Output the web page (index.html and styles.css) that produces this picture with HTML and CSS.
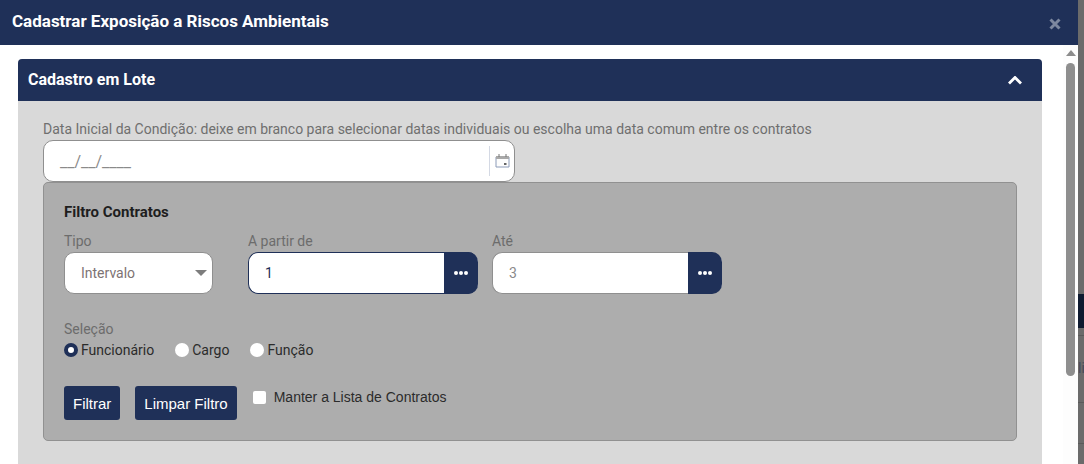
FILE: index.html
```html
<!DOCTYPE html>
<html lang="pt-BR">

<head>
    <meta charset="UTF-8">
    <title>Cadastrar Exposição a Riscos Ambientais</title>
    <link rel="stylesheet" href="styles.css">
</head>

<body>
    <div class="modal">
        <div class="modal-topo">
            <h1>Cadastrar Exposição a Riscos Ambientais</h1>
            <svg class="fechar" width="12" height="12" viewBox="0 0 12 12"><path d="M1.500 1.500l9 9M10.500 1.500l-9 9" stroke="#7d889f" stroke-width="3" fill="none"/></svg>
        </div>
        <div class="modal-corpo">
            <div class="conteudo">
                <div class="painel">
                    <div class="painel-topo">
                        <h2>Cadastro em Lote</h2>
                        <svg width="14" height="9" viewBox="0 0 14 9"><path d="M1 7.500l6-6 6 6" stroke="#fff" stroke-width="2.800" fill="none"/></svg>
                    </div>
                    <div class="painel-corpo">
                        <label class="rotulo">Data Inicial da Condição: deixe em branco para selecionar datas individuais ou escolha uma data comum entre os contratos</label>
                        <div class="campo-data">
                            <span class="mascara">__/__/____</span>
                            <span class="icone-data">
                                <svg width="15" height="14" viewBox="0 0 15 14">
                                    <path d="M1 3h13v10H1z" fill="#fdfdfd" stroke="#8c9bb8"/>
                                    <path d="M1 2h13v3H1z" fill="#a9a9a9"/>
                                    <path d="M4 0v3M11 0v3" stroke="#777"/>
                                    <path d="M9 9h2.500v2H9z" fill="#666"/>
                                </svg>
                            </span>
                        </div>
                        <div class="filtro">
                            <h3>Filtro Contratos</h3>
                            <div class="linha-campos">
                                <div class="grupo grupo-tipo">
                                    <label>Tipo</label>
                                    <div class="select">Intervalo <span class="seta"></span></div>
                                </div>
                                <div class="grupo">
                                    <label>A partir de</label>
                                    <div class="input-busca ativo">
                                        <span class="valor">1</span>
                                        <span class="btn-busca"><i></i><i></i><i></i></span>
                                    </div>
                                </div>
                                <div class="grupo">
                                    <label>Até</label>
                                    <div class="input-busca">
                                        <span class="valor">3</span>
                                        <span class="btn-busca"><i></i><i></i><i></i></span>
                                    </div>
                                </div>
                            </div>
                            <div class="selecao">
                                <label>Seleção</label>
                                <div class="radios">
                                    <span class="radio marcado"></span><span class="radio-texto">Funcionário</span>
                                    <span class="radio"></span><span class="radio-texto">Cargo</span>
                                    <span class="radio"></span><span class="radio-texto">Função</span>
                                </div>
                            </div>
                            <div class="acoes">
                                <button>Filtrar</button>
                                <button>Limpar Filtro</button>
                                <span class="check"></span>
                                <span class="check-texto">Manter a Lista de Contratos</span>
                            </div>
                        </div>
                    </div>
                </div>
            </div>
            <div class="barra">
                <span class="barra-seta"></span>
                <span class="barra-thumb"></span>
            </div>
        </div>
    </div>
    <!-- tela de tras, escurecida -->
    <div class="fundo">
        <div class="fundo-botao"></div>
        <div class="fundo-linha"></div>
        <div class="fundo-texto">li</div>
        <div class="fundo-linha linha-2"></div>
        <div class="fundo-linha linha-3"></div>
    </div>
</body>

</html>
```

FILE: styles.css
```css
* {
    box-sizing: border-box;
}

body {
    margin: 0;
    height: 464px;
    overflow: hidden;
    display: flex;
    font-family: Roboto, sans-serif;
    font-size: 14px;
}

.modal {
    width: 1078px;
    height: 464px;
    background: #fff;
    flex-shrink: 0;
}

.modal-topo {
    height: 45px;
    background: #1f3058;
    display: flex;
    justify-content: space-between;
    align-items: center;
    padding: 0 17px 0 12px;
}

.modal-topo h1 {
    margin: 0 0 4px;
    font-size: 17px;
    font-weight: 700;
    color: #fff;
}

.fechar {
    margin-top: 2px;
}

.modal-corpo {
    display: flex;
    height: 419px;
}

.conteudo {
    flex: 1;
    padding: 14px 21px 0 18px;
}

.painel-topo {
    height: 42px;
    background: #1f3058;
    border-radius: 4px 4px 0 0;
    display: flex;
    justify-content: space-between;
    align-items: center;
    padding: 0 20px 0 10px;
}

.painel-topo h2 {
    margin: 0 0 2px;
    font-size: 16px;
    font-weight: 700;
    color: #fff;
}

.painel-corpo {
    height: 363px;
    background: #d9d9d9;
    padding: 20px 25px 0;
}

.rotulo {
    display: block;
    height: 19px;
    line-height: 17px;
    color: #6f6f6f;
}

.campo-data {
    width: 472px;
    height: 42px;
    background: #fff;
    border: 1px solid #8f8f8f;
    border-radius: 10px;
    display: flex;
    justify-content: space-between;
    align-items: center;
    padding: 0 4px 0 16px;
}

.mascara {
    color: #8a8a8a;
    font-size: 16px;
}

.icone-data {
    height: 30px;
    width: 21px;
    border-left: 1px solid #d4d9e4;
    display: flex;
    align-items: center;
    justify-content: flex-end;
}

.filtro {
    height: 259px;
    background: #adadad;
    border: 1px solid #919191;
    border-radius: 5px;
    padding: 20px 20px 0;
}

.filtro h3 {
    margin: 0 0 8px;
    font-size: 15px;
    font-weight: 700;
    color: #1e1e1e;
    line-height: 19px;
}

.linha-campos {
    display: flex;
    gap: 14px;
}

.grupo label,
.selecao label {
    display: block;
    color: #6c6c6c;
    line-height: 22px;
}

.grupo-tipo {
    margin-right: 21px;
}

.select {
    width: 149px;
    height: 42px;
    background: #fff;
    border: 1px solid #8f8f8f;
    border-radius: 10px;
    color: #7d7373;
    display: flex;
    justify-content: space-between;
    align-items: center;
    padding: 0 5px 0 16px;
}

.seta {
    border-left: 6px solid transparent;
    border-right: 6px solid transparent;
    border-top: 6px solid #7d7d7d;
}

.input-busca {
    width: 230px;
    height: 42px;
    display: flex;
    background: #fff;
    border: 1px solid #8f8f8f;
    border-right: 0;
    border-radius: 10px;
}

.input-busca.ativo {
    border-color: #1f3058;
}

.valor {
    flex: 1;
    align-self: center;
    padding-left: 16px;
    color: #8a8a8a;
}

.ativo .valor {
    color: #1f3058;
}

.btn-busca {
    width: 34px;
    margin: -1px 0;
    background: #1f3058;
    border-radius: 0 10px 10px 0;
    display: flex;
    justify-content: center;
    align-items: center;
    gap: 1px;
}

.btn-busca i {
    width: 4px;
    height: 4px;
    border-radius: 50%;
    background: #fff;
}

.selecao {
    margin-top: 24px;
}

.radios {
    display: flex;
    align-items: center;
    height: 20px;
    color: #2b2b2b;
}

.radio {
    width: 14px;
    height: 14px;
    border-radius: 50%;
    background: #fff;
    margin-right: 3px;
}

.radio.marcado {
    border: 4px solid #1f3058;
}

.radio-texto {
    margin-right: 21px;
}

.acoes {
    display: flex;
    align-items: flex-start;
    margin-top: 26px;
    font-family: "Liberation Sans", Arial, sans-serif;
}

.acoes button {
    height: 34px;
    padding: 0 9px;
    margin-right: 15px;
    background: #1f3058;
    color: #fff;
    border: 0;
    border-radius: 3px;
    font-family: "Liberation Sans", Arial, sans-serif;
    font-size: 15px;
}

.check {
    width: 13px;
    height: 13px;
    margin: 5px 8px 0 1px;
    background: #fff;
    border-radius: 2px;
}

.check-texto {
    line-height: 22px;
    color: #2b2b2b;
}

.barra {
    width: 15px;
    background: #fdfdfd;
    display: flex;
    flex-direction: column;
    align-items: center;
    padding-top: 5px;
}

.barra-seta {
    border-left: 5px solid transparent;
    border-right: 5px solid transparent;
    border-bottom: 6px solid #8c8c8c;
}

.barra-thumb {
    width: 9px;
    height: 313px;
    margin-top: 7px;
    background: #8e8e8e;
    border-radius: 5px;
}

.fundo {
    flex: 1;
    background: #6b6b6b;
    overflow: hidden;
}

.fundo-botao {
    height: 34px;
    margin-top: 294px;
    background: #0e1a30;
}

.fundo-linha {
    height: 1px;
    margin-top: 7px;
    background: #5a5a5a;
}

.fundo-texto {
    margin-top: 24px;
    height: 17px;
    line-height: 17px;
    color: #45495a;
    font-size: 14px;
}

.linha-2 {
    margin-top: 25px;
}

.linha-3 {
    margin-top: 40px;
}
```
